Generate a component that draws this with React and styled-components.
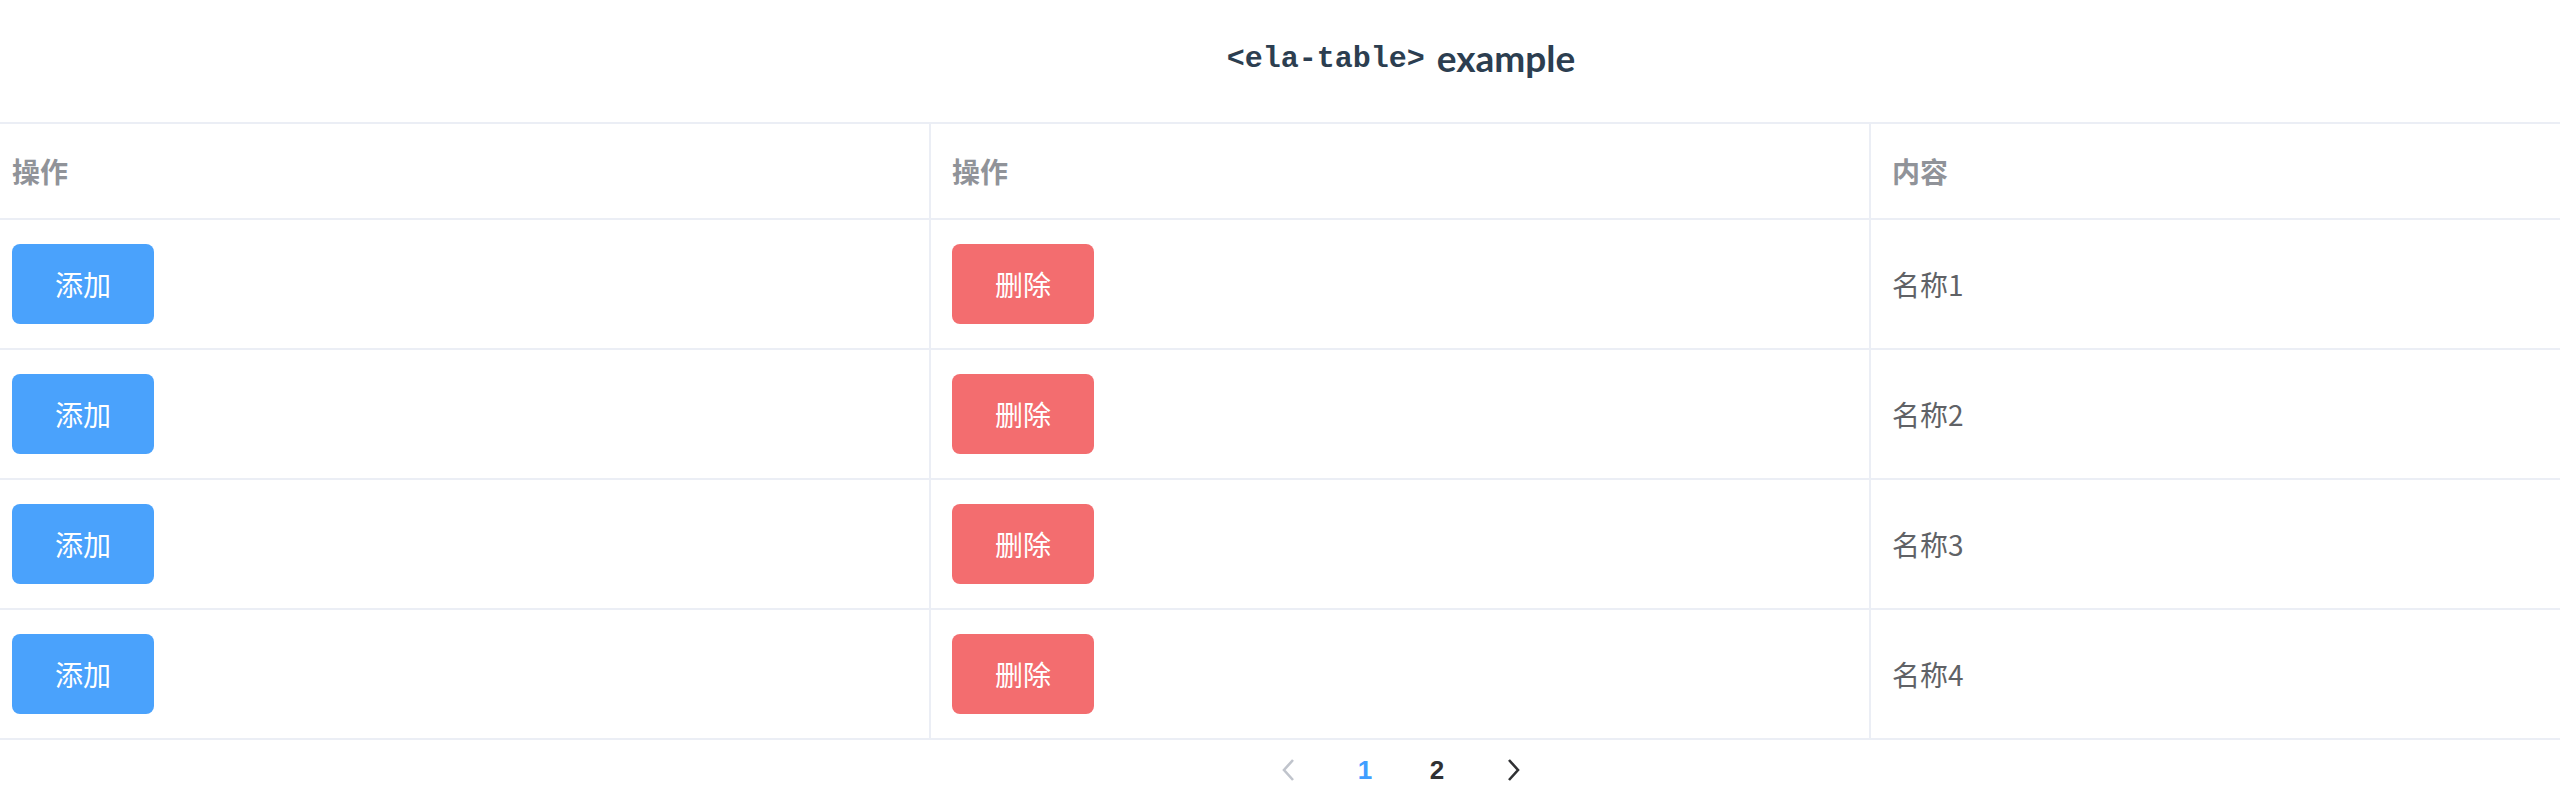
import styled, { createGlobalStyle } from "styled-components";

const GlobalStyle = createGlobalStyle`
  body {
    margin: 0;
    background: #fff;
    overflow: hidden;
  }
`;

const Viewport = styled.div`
  width: 100%;
  height: 806px;
  overflow: hidden;
`;

const Stage = styled.div`
  width: 2820px;
  margin-left: -9px;
  font-family: "Liberation Sans", "Noto Sans CJK SC", sans-serif;
`;

const Heading = styled.h2`
  margin: 0;
  box-sizing: border-box;
  height: 122px;
  padding-bottom: 8px;
  display: flex;
  align-items: center;
  justify-content: center;
  gap: 12px;
  color: #2c3e50;
  font-family: Lato, "Noto Sans", sans-serif;
  font-size: 37px;
  font-weight: 700;
`;

const Code = styled.code`
  font-family: "Liberation Mono", monospace;
  font-size: 30px;
  font-weight: 700;
  padding-top: 4px;
`;

const Table = styled.div`
  border-top: 2px solid #ebeef5;
`;

const Row = styled.div`
  display: grid;
  grid-template-columns: 940px 940px 940px;
`;

const Cell = styled.div`
  box-sizing: border-box;
  height: ${(props) => (props.head ? "96px" : "130px")};
  display: flex;
  align-items: center;
  padding-left: 21px;
  border-bottom: 2px solid #ebeef5;
  border-right: ${(props) => (props.last ? "none" : "2px solid #ebeef5")};
  font-size: 28px;
  font-family: "Noto Sans CJK SC", sans-serif;
  color: ${(props) => (props.head ? "#909399" : "#606266")};
  font-weight: ${(props) => (props.head ? 700 : 400)};
`;

const Button = styled.button`
  width: 142px;
  height: 80px;
  border: none;
  border-radius: 8px;
  background: ${(props) => (props.danger ? "#f36d6f" : "#4aa2fc")};
  color: #fff;
  font-family: "Noto Sans CJK SC", sans-serif;
  font-size: 28px;
  cursor: pointer;
`;

const Pager = styled.div`
  display: flex;
  justify-content: center;
  padding-top: 2px;
`;

const PagerItem = styled.div`
  width: ${(props) => (props.arrow ? "80px" : "72px")};
  height: 56px;
  display: flex;
  align-items: center;
  justify-content: center;
  font-family: "Liberation Sans", sans-serif;
  font-size: 26px;
  font-weight: 700;
  color: ${(props) => (props.active ? "#409eff" : "#303133")};
`;

const Chevron = ({ dir, color }) => (
  <svg width="16" height="24" viewBox="0 0 16 24">
    <path
      d={dir === "left" ? "M12 2 L3 12 L12 22" : "M4 2 L13 12 L4 22"}
      fill="none"
      stroke={color}
      strokeWidth="2.6"
    />
  </svg>
);

const rows = [1, 2, 3, 4];

const App = () => (
  <Viewport>
    <GlobalStyle />
    <Stage>
      <Heading>
        <Code>&lt;ela-table&gt;</Code>
        <span>example</span>
      </Heading>
      <Table>
        <Row>
          <Cell head>操作</Cell>
          <Cell head>操作</Cell>
          <Cell head last>内容</Cell>
        </Row>
        {rows.map((n) => (
          <Row key={n}>
            <Cell>
              <Button>添加</Button>
            </Cell>
            <Cell>
              <Button danger>删除</Button>
            </Cell>
            <Cell last>名称{n}</Cell>
          </Row>
        ))}
      </Table>
      <Pager>
        <PagerItem arrow>
          <Chevron dir="left" color="#c0c4cc" />
        </PagerItem>
        <PagerItem active>1</PagerItem>
        <PagerItem>2</PagerItem>
        <PagerItem arrow>
          <Chevron dir="right" color="#303133" />
        </PagerItem>
      </Pager>
    </Stage>
  </Viewport>
);

export default App;
